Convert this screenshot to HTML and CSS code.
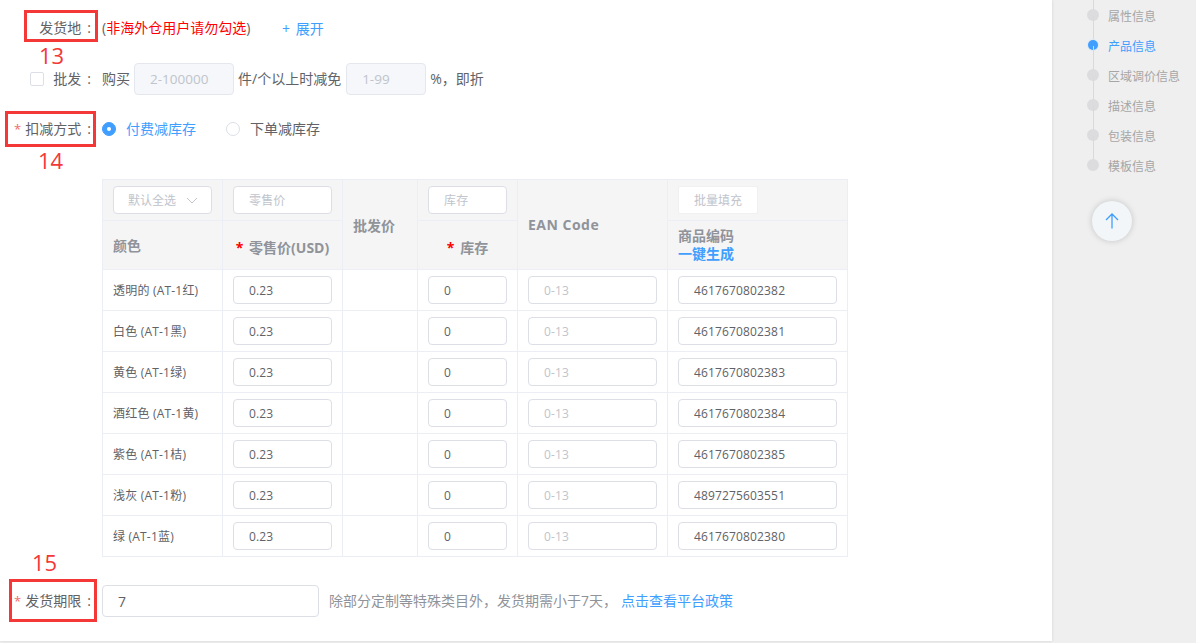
FILE: index.html
```html
<!DOCTYPE html>
<html lang="zh-CN">
<head>
<meta charset="utf-8">
<title>产品信息</title>
<link rel="stylesheet" href="styles.css">
</head>
<body>
<div class="page">
  <main class="main">
    <div class="form-row row-origin">
      <div class="label">发货地 :</div>
      <div class="note"><span class="paren">(</span>非海外仓用户请勿勾选<span class="paren">)</span></div>
      <a class="expand">+ 展开</a>
    </div>
    <div class="form-row row-bulk">
      <div class="label label-check"><span class="checkbox"></span><span>批发 :</span></div>
      <span class="inline-text">购买</span>
      <input class="input input-gray w100" placeholder="2-100000" readonly>
      <span class="inline-text">件/个以上时减免</span>
      <input class="input input-gray w80" placeholder="1-99" readonly>
      <span class="inline-text">%，即折</span>
    </div>
    <div class="form-row row-deduct">
      <div class="label"><span class="req">*</span>扣减方式 :</div>
      <span class="radio radio-on"></span><span class="radio-text on">付费减库存</span>
      <span class="radio"></span><span class="radio-text">下单减库存</span>
    </div>

    <table class="sku">
      <colgroup><col class="c1"><col class="c2"><col class="c3"><col class="c4"><col class="c5"><col class="c6"></colgroup>
      <thead>
        <tr class="h1">
          <th><div class="select"><span>默认全选</span><svg width="12" height="7" viewBox="0 0 12 7"><path d="M1 1l5 5 5-5" fill="none" stroke="#c0c4cc" stroke-width="1"/></svg></div></th>
          <th><input class="input cell" placeholder="零售价" readonly></th>
          <th rowspan="2" class="tall">批发价</th>
          <th><input class="input cell" placeholder="库存" readonly></th>
          <th rowspan="2" class="tall ean">EAN Code</th>
          <th><button class="fill" type="button">批量填充</button></th>
        </tr>
        <tr class="h2">
          <th>颜色</th>
          <th class="center"><span class="star">*</span> 零售价(USD)</th>
          <th class="center"><span class="star">*</span> 库存</th>
          <th class="code-head">商品编码<a class="gen">一键生成</a></th>
        </tr>
      </thead>
      <tbody>
        <tr><td>透明的 (AT-1红)</td><td><input class="input cell" value="0.23" readonly></td><td></td><td><input class="input cell" value="0" readonly></td><td><input class="input cell" placeholder="0-13" readonly></td><td><input class="input cell" value="4617670802382" readonly></td></tr>
        <tr><td>白色 (AT-1黑)</td><td><input class="input cell" value="0.23" readonly></td><td></td><td><input class="input cell" value="0" readonly></td><td><input class="input cell" placeholder="0-13" readonly></td><td><input class="input cell" value="4617670802381" readonly></td></tr>
        <tr><td>黄色 (AT-1绿)</td><td><input class="input cell" value="0.23" readonly></td><td></td><td><input class="input cell" value="0" readonly></td><td><input class="input cell" placeholder="0-13" readonly></td><td><input class="input cell" value="4617670802383" readonly></td></tr>
        <tr><td>酒红色 (AT-1黄)</td><td><input class="input cell" value="0.23" readonly></td><td></td><td><input class="input cell" value="0" readonly></td><td><input class="input cell" placeholder="0-13" readonly></td><td><input class="input cell" value="4617670802384" readonly></td></tr>
        <tr><td>紫色 (AT-1桔)</td><td><input class="input cell" value="0.23" readonly></td><td></td><td><input class="input cell" value="0" readonly></td><td><input class="input cell" placeholder="0-13" readonly></td><td><input class="input cell" value="4617670802385" readonly></td></tr>
        <tr><td>浅灰 (AT-1粉)</td><td><input class="input cell" value="0.23" readonly></td><td></td><td><input class="input cell" value="0" readonly></td><td><input class="input cell" placeholder="0-13" readonly></td><td><input class="input cell" value="4897275603551" readonly></td></tr>
        <tr><td>绿 (AT-1蓝)</td><td><input class="input cell" value="0.23" readonly></td><td></td><td><input class="input cell" value="0" readonly></td><td><input class="input cell" placeholder="0-13" readonly></td><td><input class="input cell" value="4617670802380" readonly></td></tr>
      </tbody>
    </table>

    <div class="form-row row-ship">
      <div class="label"><span class="req">*</span>发货期限 :</div>
      <input class="input w217" value="7" readonly>
      <span class="hint">除部分定制等特殊类目外，发货期需小于7天，</span>
      <a class="policy">点击查看平台政策</a>
    </div>

    <div class="mark box13"></div><div class="num n13">13</div>
    <div class="mark box14"></div><div class="num n14">14</div>
    <div class="mark box15"></div><div class="num n15">15</div>
  </main>

  <aside class="side">
    <ul class="steps">
      <li>属性信息</li>
      <li class="active">产品信息</li>
      <li>区域调价信息</li>
      <li>描述信息</li>
      <li>包装信息</li>
      <li>模板信息</li>
    </ul>
    <button class="top" type="button" aria-label="返回顶部">
      <svg width="14" height="16" viewBox="0 0 14 16"><path d="M7 15.5V1M1 7l6-6 6 6" fill="none" stroke="#409eff" stroke-width="1.3"/></svg>
    </button>
  </aside>
</div>
</body>
</html>
```
FILE: styles.css
```css
* { box-sizing: border-box; }
html, body { margin: 0; height: 100%; overflow: hidden; }
body {
  background: #efefef;
  font-family: "Open Sans", "Noto Sans CJK SC", sans-serif;
  font-size: 14px;
  color: #606266;
}
.page { display: flex; height: 641px; }
.main {
  position: relative;
  width: 1052px;
  flex: none;
  background: #fff;
  box-shadow: 0 0 3px rgba(0,0,0,.12);
}
.form-row { display: flex; align-items: center; line-height: 30px; }
.label {
  width: 91px;
  margin-right: 11px;
  flex: none;
  text-align: right;
  white-space: nowrap;
  word-spacing: 2.5px;
}
.req { color: #f56c6c; margin-right: 4px; font-size: 13px; }
.row-origin { height: 32px; margin-top: 12px; }
.note { color: #f00; width: 180px; margin-top: -1px; }
.paren { color: #606266; }
.expand { color: #409eff; word-spacing: 2px; margin-top: 1px; }
.row-bulk { height: 32px; margin-top: 19px; }
.label-check { display: flex; justify-content: flex-end; align-items: center; gap: 9px; }
.checkbox { width: 14px; height: 14px; border: 1px solid #dcdfe6; border-radius: 2px; background: #fff; }
.inline-text { margin: 0 4px; }
.inline-text + .input + .inline-text { margin-right: 5px; }
.row-bulk .inline-text:first-of-type { margin-left: 0; }
.row-deduct { height: 32px; margin-top: 18px; }
.radio {
  width: 14px; height: 14px; border-radius: 50%;
  border: 1px solid #dcdfe6; background: #fff; flex: none;
  display: flex; align-items: center; justify-content: center;
}
.radio-on { background: #409eff; border-color: #409eff; }
.radio-on::after { content: ""; width: 4px; height: 4px; border-radius: 50%; background: #fff; }
.radio-text { margin-left: 10px; margin-right: 30px; }
.radio-text.on { color: #409eff; }
.input {
  height: 32px;
  padding: 0 15px;
  border: 1px solid #dcdfe6;
  border-radius: 4px;
  background: #fff;
  color: #606266;
  font: inherit;
  outline: none;
}
.input::placeholder { color: #c0c4cc; opacity: 1; }
.input-gray { background: #f5f7fa; border-color: #e4e7ed; font-size: 13.5px; }
.w100 { width: 100px; }
.w80 { width: 80px; }
.w217 { width: 217px; }
.sku {
  margin: 34px 0 0 102px;
  border-collapse: collapse;
  table-layout: fixed;
  width: 745px;
}
.c1, .c2 { width: 120px; }
.c3 { width: 75px; }
.c4 { width: 100px; }
.c5 { width: 150px; }
.c6 { width: 180px; }
.sku th, .sku td {
  border: 1px solid #ebeef5;
  padding: 0 10px;
  text-align: left;
  vertical-align: middle;
}
.sku th { background: #f5f5f6; color: #909399; font-weight: 700; font-size: 14px; }
.sku td { height: 41px; font-size: 12px; color: #606266; letter-spacing: .2px; }
.h1 th { height: 41px; }
.h2 th { height: 49px; }
.sku th.center { text-align: center; padding: 4px 0 0; }
.sku th.tall { padding-bottom: 0; }
.sku th.ean { letter-spacing: .5px; }
.star { color: #f00; margin-right: 2px; }
.cell { display: block; width: 100%; height: 28px; font-size: 12px; font-weight: 400; letter-spacing: .15px; }
.select {
  display: flex; align-items: center; justify-content: space-between;
  height: 28px; padding: 0 13px 0 14px;
  border: 1px solid #dcdfe6; border-radius: 4px; background: #fff;
  color: #c0c4cc; font-size: 12px; font-weight: 400;
}
.fill {
  display: block; width: 80px; height: 28px; padding: 0;
  border: 1px solid #f0f0f2; border-radius: 2px; background: #fff;
  color: #c0c4cc; font: inherit; font-size: 12px; font-weight: 400;
}
.sku th.code-head { line-height: 18px; }
.gen { display: block; color: #409eff; }
.row-ship { height: 32px; margin-top: 28px; }
.hint { margin-left: 10px; color: #909399; }
.policy { color: #409eff; margin-left: 4px; }
.mark { position: absolute; border: 3px solid #f43838; }
.box13 { left: 24px; top: 10px; width: 74px; height: 32px; }
.box14 { left: 5px; top: 111px; width: 91px; height: 36px; }
.box15 { left: 9px; top: 579px; width: 88px; height: 43px; }
.num { position: absolute; color: #f43838; font-size: 22px; line-height: 26px; }
.n13 { left: 39px; top: 42px; }
.n14 { left: 38px; top: 147px; }
.n15 { left: 32px; top: 549px; }
.side { flex: 1; color: #a6a6a6; font-size: 12px; }
.steps { list-style: none; margin: 0; padding: 1px 0 0 41px; }
.steps li {
  position: relative;
  height: 30px;
  line-height: 31px;
  padding-left: 15px;
  white-space: nowrap;
}
.steps li::before {
  content: "";
  position: absolute; left: 0; top: -15px; width: 1px; height: 30px;
  background: #d9d9d9;
}
.steps li::after {
  content: "";
  position: absolute; left: -6px; top: 8px; width: 12px; height: 12px;
  border-radius: 50%; background: #dcdcde;
}
.steps li.active { color: #409eff; }
.steps li.active::after { background: #409eff; box-shadow: 0 0 0 1px #dce9f5; left: -5px; top: 9px; width: 10px; height: 10px; }
.top {
  display: flex; align-items: center; justify-content: center;
  width: 40px; height: 40px; padding: 0;
  margin: 20px 0 0 40px;
  border: none; border-radius: 50%;
  background: #f2f6f8;
  box-shadow: 0 0 6px rgba(0,0,0,.18);
}
```
